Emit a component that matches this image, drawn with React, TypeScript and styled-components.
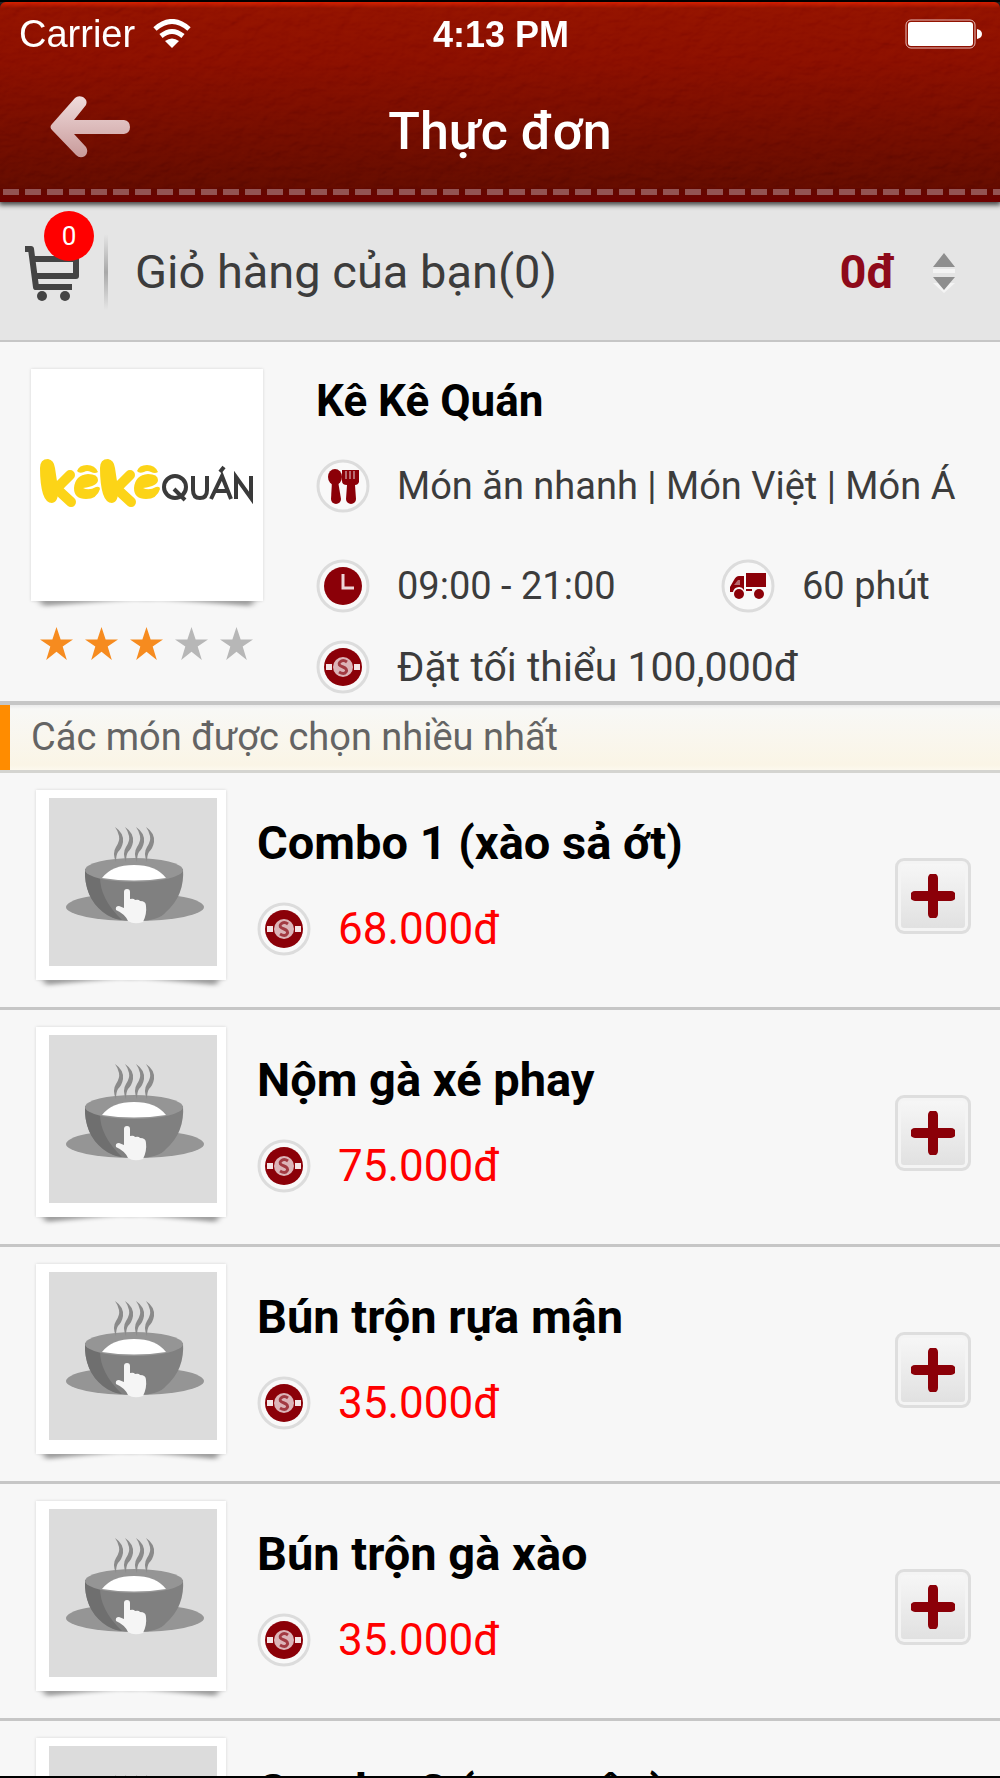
import React from "react";
import styled, { createGlobalStyle } from "styled-components";

const GlobalStyle = createGlobalStyle`
  * { box-sizing: border-box; }
  body { margin: 0; background: #000; font-family: Roboto, "Liberation Sans", sans-serif; }
  h1, h2, h3, p, ul { margin: 0; padding: 0; }
  button { font: inherit; color: inherit; padding: 0; border: 0; background: none; cursor: pointer; }
`;

const Screen = styled.div`
  display: flex;
  flex-direction: column;
  height: 100vh;
  padding: 2px 0;
  background: #000;
`;

const Header = styled.header`
  position: relative;
  z-index: 1;
  flex: none;
  display: flex;
  flex-direction: column;
  height: 200px;
  border-radius: 6px 6px 0 0;
  background: linear-gradient(#d41c00 0, #901000 6px, #880d00 60px, #600a00 184px, #6e0000 200px);
  box-shadow: 0 2px 5px 1px rgba(0, 0, 0, 0.7);
  color: #fff;
`;

const Leather = styled.svg`
  position: absolute;
  inset: 0;
  width: 100%;
  height: 186px;
  mix-blend-mode: soft-light;
  opacity: 0.2;
`;

const StatusBar = styled.div`
  position: relative;
  display: grid;
  grid-template-columns: 1fr auto 1fr;
  align-items: center;
  height: 64px;
  padding: 0 17px 0 19px;
  font-family: "Liberation Sans", Arial, sans-serif;
  line-height: 40px;
`;

const Carrier = styled.div`
  display: flex;
  align-items: center;
  gap: 18px;
  font-size: 38px;
`;

const Clock = styled.div`
  padding-top: 2px;
  font-size: 36px;
  font-weight: 700;
`;

const Battery = styled.svg`
  justify-self: end;
`;

const TitleBar = styled.div`
  position: relative;
  display: grid;
  grid-template-columns: 1fr auto 1fr;
  align-items: center;
  height: 120px;
  padding: 0 48px;
`;

const BackButton = styled.button`
  display: flex;
  justify-self: start;
`;

const Title = styled.h1`
  padding-top: 12px;
  font-size: 52px;
  line-height: 64px;
  font-weight: 500;
`;

const Stitches = styled.div`
  position: relative;
  height: 6px;
  margin: 3px 0 0 3px;
  background: repeating-linear-gradient(90deg, #935353 0 16px, transparent 16px 22px);
`;

const CartBar = styled.section`
  flex: none;
  display: flex;
  align-items: center;
  height: 140px;
  padding: 2px 44px 0 24px;
  border-bottom: 2px solid #c6c6c6;
  background: #e5e5e5;
`;

const CartButton = styled.button`
  position: relative;
  display: flex;
  width: 70px;
  height: 90px;
  align-items: flex-end;
  padding-bottom: 16px;
`;

const Badge = styled.span`
  position: absolute;
  top: -16px;
  left: 20px;
  width: 50px;
  height: 50px;
  border-radius: 50%;
  background: #f00;
  color: #fff;
  font-size: 26px;
  line-height: 50px;
  text-align: center;
`;

const Divider = styled.span`
  width: 4px;
  height: 76px;
  margin: 0 27px 0 10px;
  background: linear-gradient(transparent, #a8a8a8 50%, transparent);
`;

const CartLabel = styled.h2`
  flex: 1;
  font-size: 47px;
  line-height: 56px;
  font-weight: 400;
  color: #3c3c3c;
`;

const CartTotal = styled.span`
  margin-right: 36px;
  font-size: 47px;
  line-height: 56px;
  font-weight: 700;
  color: #8e0a1a;
`;

const SortButton = styled.button`
  display: flex;
`;

const Restaurant = styled.section`
  flex: none;
  display: flex;
  gap: 53px;
  height: 363px;
  padding: 27px 48px 0 31px;
  border-bottom: 4px solid #c6c6c6;
  background: #f7f7f7;
`;

const BrandColumn = styled.div`
  flex: none;
  width: 232px;
`;

const Photo = styled.div<{ $size: number; $pad?: string }>`
  position: relative;
  flex: none;
  width: ${(p) => p.$size}px;
  height: ${(p) => p.$size}px;
  padding: ${(p) => p.$pad ?? "0"};
  background: #fff;
  box-shadow: 0 0 3px rgba(0, 0, 0, 0.14);
`;

const CurlShape = styled.svg`
  position: absolute;
  top: 100%;
  left: 0;
  width: 100%;
  height: 10px;
`;

const BrandLogo = styled.svg`
  display: block;
  width: 100%;
  height: 100%;
`;

const Stars = styled.div`
  display: flex;
  gap: 12px;
  padding: 26px 0 0 9px;
`;

const Details = styled.div`
  flex: 1;
  min-width: 0;
`;

const RestaurantName = styled.h2`
  font-size: 44px;
  line-height: 64px;
  font-weight: 700;
  color: #000;
`;

const InfoRow = styled.div<{ $height: number }>`
  display: flex;
  align-items: center;
  height: ${(p) => p.$height}px;
`;

const Info = styled.p<{ $size: number; $width?: string }>`
  display: flex;
  align-items: center;
  gap: 27px;
  width: ${(p) => p.$width ?? "auto"};
  font-size: ${(p) => p.$size}px;
  line-height: 48px;
  color: #3c3c3c;
  white-space: nowrap;
`;

const SectionTitle = styled.h2`
  flex: none;
  height: 68px;
  padding-left: 31px;
  border-bottom: 3px solid #d4d4d0;
  background:
    linear-gradient(#ff8c00, #ff8c00) 0 0 / 10px 100% no-repeat,
    linear-gradient(#ebebeb 0, #f8f8f6 4px, #faf5e6 60px, #fcf9ee 65px);
  font-size: 38px;
  line-height: 64px;
  font-weight: 400;
  color: #646464;
`;

const Menu = styled.ul`
  flex: 1;
  min-height: 0;
  overflow-y: auto;
  scrollbar-width: none;
  list-style: none;
  background: #f7f7f7;
`;

const Dish = styled.li`
  display: flex;
  gap: 31px;
  height: 237px;
  padding: 17px 29px 0 36px;
  border-bottom: 3px solid #c6c6c6;
`;

const DishText = styled.div`
  flex: 1;
  padding-top: 25px;
`;

const DishName = styled.h3`
  font-size: 47px;
  line-height: 56px;
  font-weight: 700;
  color: #000;
`;

const Price = styled.p`
  display: flex;
  align-items: center;
  gap: 27px;
  padding-top: 31px;
  font-size: 44px;
  line-height: 54px;
  color: #f00;
`;

const AddButton = styled.button`
  display: flex;
  align-items: center;
  justify-content: center;
  width: 76px;
  height: 76px;
  margin-top: 68px;
  border: 3px solid #dedede;
  border-radius: 9px;
  background: linear-gradient(#f7f7f7, #e0e0e0);
  box-shadow: inset 0 0 0 3px #f4f4f4;
`;

const RED = "#8b0008";

function Curl() {
  return (
    <CurlShape viewBox="0 0 190 10" preserveAspectRatio="none" aria-hidden="true">
      <defs>
        <filter id="curlBlur" x="-5%" y="-100%" width="110%" height="300%">
          <feGaussianBlur stdDeviation="3 2" />
        </filter>
      </defs>
      <path d="M6 -2H184L180 5Q140 1 95 -3Q50 1 10 5Z" fill="#000" fillOpacity="0.38" filter="url(#curlBlur)" />
    </CurlShape>
  );
}

function Ring({ children }: { children: React.ReactNode }) {
  return (
    <svg width="54" height="54" viewBox="0 0 54 54" aria-hidden="true">
      <circle cx="27" cy="27" r="25" fill="#f9f9f9" stroke="#dcdcdc" strokeWidth="3" />
      {children}
    </svg>
  );
}

function CutleryIcon() {
  return (
    <Ring>
      <g fill={RED}>
        <ellipse cx="19" cy="18" rx="7" ry="8" />
        <path d="M16 22h6l3 18a5 5 0 0 1-10 0z" />
        <path d="M26 11h17v12q-1 3-4 3l1 14a5 5 0 0 1-10 0l1-14q-5 0-5-4z" />
      </g>
      <path d="M30 12v8M34 12v8M38 12v8" stroke="#b86a70" strokeWidth="2" />
    </Ring>
  );
}

function ClockIcon() {
  return (
    <Ring>
      <circle cx="27" cy="27" r="19" fill={RED} />
      <path d="M27 15v14h11" fill="none" stroke="#eed5d7" strokeWidth="3" />
    </Ring>
  );
}

function TruckIcon() {
  return (
    <Ring>
      <g fill={RED}>
        <path d="M25 14h20v14H25z" />
        <path d="M23 17h-5q-3 0-5 4l-4 7v5h3a6 6 0 0 1 11-2z" />
        <circle cx="18" cy="35" r="5" />
        <circle cx="38" cy="35" r="5" />
        <path d="M25 30h6v2h-6z" />
      </g>
      <path d="M13 26l4-5h2v5z" fill="#b86a70" />
    </Ring>
  );
}

function CoinIcon() {
  return (
    <Ring>
      <circle cx="27" cy="27" r="19" fill={RED} />
      <path d="M10 24h6v6h-6zM38 24h6v6h-6z" fill="#f4e4e5" />
      <circle cx="27" cy="27" r="10" fill="#dcb4b8" />
      <path d="M31 22q-4-3-7 0t3 5q5 2 3 5t-7 0" fill="none" stroke="#a23a42" strokeWidth="3" />
    </Ring>
  );
}

function WifiIcon() {
  return (
    <svg width="38" height="30" viewBox="0 0 38 30" aria-hidden="true">
      <g fill="none" stroke="#fff" strokeWidth="5">
        <path d="M2 10Q19-5 36 10" />
        <path d="M8 17Q19 8 30 17" />
      </g>
      <path d="M19 29l-7-7q7-5 14 0z" fill="#fff" />
    </svg>
  );
}

function CartIcon() {
  return (
    <svg width="56" height="56" viewBox="0 0 56 56" aria-hidden="true">
      <path d="M1 4h6l5 38h36M10 14h42v17H12" fill="none" stroke="#444" strokeWidth="6" strokeLinejoin="round" />
      <circle cx="18" cy="51" r="5" fill="#444" />
      <circle cx="41" cy="51" r="5" fill="#444" />
    </svg>
  );
}

function Star({ on }: { on: boolean }) {
  return (
    <svg width="33" height="33" viewBox="0 0 32 32" aria-hidden="true">
      <path d="M16 0l4 12h12l-10 7 4 13-10-8-10 8 4-13L0 12h12z" fill={on ? "#f68b1f" : "#b7b7b7"} />
    </svg>
  );
}

function KekeLogo() {
  return (
    <BrandLogo viewBox="0 0 232 232" role="img" aria-label="kêkê QUÁN">
      <defs>
        <g id="ke">
          <path d="M9 99q0-9 8-9 6 1 7 9l3 20q1 14-6 15-6 0-9-9-3-10-3-26z" />
          <path d="M26 119L39 106M27 121l13 12" stroke="#fcd417" strokeWidth="10" strokeLinecap="round" />
          <path d="M43 119q1-13 14-14 10 0 10 6t-15 8q6 3 13-1 4-1 4 2-3 10-14 10-12 0-12-11z" />
          <path d="M46 102q2-6 10-6t11 7q-3 2-7 0-4-2-7 0-5 2-7-1z" />
        </g>
      </defs>
      <g fill="#fcd417">
        <use href="#ke" />
        <use href="#ke" x="60" />
      </g>
      <g fill="none" stroke="#3a3a3a" strokeWidth="4">
        <circle cx="144" cy="118" r="11" />
        <path d="M143 120l11 11M162 107v14q0 8 7 8t7-8v-14M180 130l11-23 9 23M184 122h13M205 130v-22l15 21v-22M189 103l4-5" />
      </g>
    </BrandLogo>
  );
}

function BowlIcon() {
  return (
    <svg width="168" height="168" viewBox="0 0 168 168" role="img" aria-label="Món ăn">
      <path d="M0 0h168v168H0z" fill="#dcdcdc" />
      <ellipse cx="86" cy="109" rx="69" ry="14" fill="#959595" />
      <path d="M36 71h98q2 26-17 43-7 9-30 9t-33-9Q35 99 36 71z" fill="#808080" />
      <path d="M36 71l15 8q0 22 22 43-10-1-19-8Q35 99 36 71z" fill="#6f6f6f" />
      <ellipse cx="85" cy="72" rx="49" ry="12" fill="#959595" />
      <path d="M53 80q10-13 32-13t32 13q-32 5-64 0z" fill="#fff" />
      <g fill="#8a8a8a">
        {[0, 10, 21, 31].map((x) => (
          <path key={x} transform={`translate(${x} 0)`} d="M66 29q9 6 8 15-1 6-5 10-2 3-2 10-4-9 0-15 4-6 3-11-1-5-4-9z" />
        ))}
      </g>
      <path d="M75 94q0-3 3-3t3 3v7q4-1 5 1 4-1 5 1 6 0 6 5 1 8-3 16-9 3-15-1-3-7-12-11-1-4 3-4l5 2z" fill="#f5f5f5" />
    </svg>
  );
}

function PlusIcon() {
  return (
    <svg width="44" height="44" viewBox="0 0 44 44" aria-hidden="true">
      <path d="M22 4v36M4 22h36" stroke={RED} strokeWidth="10" strokeLinecap="round" />
    </svg>
  );
}

const dishes = [
  { name: "Combo 1 (xào sả ớt)", price: "68.000đ" },
  { name: "Nộm gà xé phay", price: "75.000đ" },
  { name: "Bún trộn rựa mận", price: "35.000đ" },
  { name: "Bún trộn gà xào", price: "35.000đ" },
  { name: "Combo 2 (rựa mận)", price: "68.000đ" },
];

export default function App() {
  return (
    <Screen>
      <GlobalStyle />
      <Header>
        <Leather aria-hidden="true">
          <filter id="leather">
            <feTurbulence type="fractalNoise" baseFrequency="0.06 0.09" numOctaves="3" seed="4" />
            <feDiffuseLighting surfaceScale="3" lightingColor="#ddd">
              <feDistantLight azimuth="60" elevation="40" />
            </feDiffuseLighting>
          </filter>
          <rect width="100%" height="100%" filter="url(#leather)" />
        </Leather>
        <StatusBar>
          <Carrier>
            Carrier
            <WifiIcon />
          </Carrier>
          <Clock>4:13 PM</Clock>
          <Battery width="78" height="30" viewBox="0 0 78 30" aria-hidden="true">
            <rect x="1" y="1" width="69" height="28" rx="5" fill="none" stroke="#e8bcb8" strokeWidth="1" />
            <rect x="3" y="3" width="65" height="24" rx="3" fill="#fff" />
            <path d="M72 10q5 1 5 5t-5 5z" fill="#fff" />
          </Battery>
        </StatusBar>
        <TitleBar>
          <BackButton aria-label="Quay lại">
            <svg width="84" height="64" viewBox="0 0 84 64" aria-hidden="true">
              <defs>
                <linearGradient id="arrow" x2="0" y2="1">
                  <stop offset="0" stopColor="#f0dcdc" />
                  <stop offset="1" stopColor="#c89a9a" />
                </linearGradient>
              </defs>
              <path d="M27 4q3-3 8-1 5 3 3 8L26 26h50q6 1 6 7t-6 7H26l12 13q3 5-1 9-5 3-9-1L4 36q-3-3 0-6z" fill="url(#arrow)" />
            </svg>
          </BackButton>
          <Title>Thực đơn</Title>
        </TitleBar>
        <Stitches />
      </Header>

      <CartBar>
        <CartButton aria-label="Giỏ hàng">
          <CartIcon />
          <Badge>0</Badge>
        </CartButton>
        <Divider />
        <CartLabel>Giỏ hàng của bạn(0)</CartLabel>
        <CartTotal>0đ</CartTotal>
        <SortButton aria-label="Mở giỏ hàng">
          <svg width="24" height="42" viewBox="0 0 24 42" aria-hidden="true">
            <path d="M1 18h22v4H1zM12 42L1 32h22z" fill="#f4f4f4" />
            <path d="M12 2l11 14H1zM12 39L1 26h22z" fill="#8e8e8e" />
          </svg>
        </SortButton>
      </CartBar>

      <Restaurant>
        <BrandColumn>
          <Photo $size={232}>
            <KekeLogo />
            <Curl />
          </Photo>
          <Stars role="img" aria-label="3/5">
            {[1, 2, 3, 4, 5].map((n) => (
              <Star key={n} on={n <= 3} />
            ))}
          </Stars>
        </BrandColumn>
        <Details>
          <RestaurantName>Kê Kê Quán</RestaurantName>
          <InfoRow $height={106}>
            <Info $size={38}>
              <CutleryIcon />
              Món ăn nhanh | Món Việt | Món Á
            </Info>
          </InfoRow>
          <InfoRow $height={94}>
            <Info $size={38} $width="405px">
              <ClockIcon />
              09:00 - 21:00
            </Info>
            <Info $size={38}>
              <TruckIcon />
              60 phút
            </Info>
          </InfoRow>
          <InfoRow $height={68}>
            <Info $size={41}>
              <CoinIcon />
              Đặt tối thiểu 100,000đ
            </Info>
          </InfoRow>
        </Details>
      </Restaurant>

      <SectionTitle>Các món được chọn nhiều nhất</SectionTitle>
      <Menu>
        {dishes.map((dish) => (
          <Dish key={dish.name}>
            <Photo $size={190} $pad="8px 9px 14px 13px">
              <BowlIcon />
              <Curl />
            </Photo>
            <DishText>
              <DishName>{dish.name}</DishName>
              <Price>
                <CoinIcon />
                {dish.price}
              </Price>
            </DishText>
            <AddButton aria-label={`Thêm ${dish.name}`}>
              <PlusIcon />
            </AddButton>
          </Dish>
        ))}
      </Menu>
    </Screen>
  );
}
